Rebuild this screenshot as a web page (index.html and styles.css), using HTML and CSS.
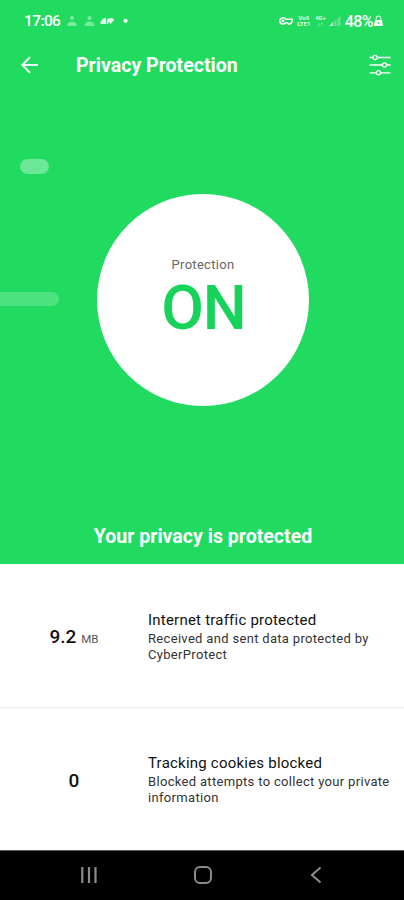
FILE: index.html
```html
<!DOCTYPE html>
<html lang="en">
<head>
<meta charset="utf-8">
<title>Privacy Protection</title>
<link rel="stylesheet" href="styles.css">
</head>
<body>
<main class="screen">
  <section class="hero">
    <div class="status">
      <span class="clock">17:06</span>
      <svg class="notices" width="66" height="14" viewBox="0 0 66 14" fill="#fff">
        <g opacity=".4"><circle cx="6" cy="4" r="2.1"/><path d="M1.300 12V10q4.700-4.800 9.400 0v2z"/></g>
        <g opacity=".4"><circle cx="23.500" cy="4" r="2.100"/><path d="M18.800 12V10q4.700-4.800 9.400 0v2z"/></g>
        <path opacity=".85" d="M34.500 10V7.500L38 4h2v6zM41 5.500Q45 2.500 48.500 5.500L44.700 10 43 8l-1 2h-1.500z"/>
        <circle cx="59.500" cy="6.800" r="2.100"/>
      </svg>
      <span class="spacer"></span>
      <svg class="key" width="16" height="12" viewBox="0 0 16 12" fill="none" stroke="#fff" stroke-width="1.500">
        <path d="M7.700 4.300A3.200 3.200 0 1 0 7.700 7.700H9L11 9.300l2-1.100 1-1.500V4.300z"/><circle cx="5" cy="6" r=".7"/>
      </svg>
      <span class="tiny volte">Vo9<br>LTE1</span>
      <span class="tiny data">4G+<br>↓↑</span>
      <svg class="signal" width="12" height="12" viewBox="0 0 12 12" fill="#fff"><path opacity=".3" d="M5 6.500l2.500-2V11H5zM8.500 3.500L11.500 1v10h-3z"/><path opacity=".7" d="M0 11l4-4v4z"/></svg>
      <span class="battery">48%</span>
      <svg class="lock" width="9" height="12" viewBox="0 0 9 12"><path d="M2.200 6V3.500a2.300 2.300 0 0 1 4.600 0V6" fill="none" stroke="#fff" stroke-opacity=".75" stroke-width="1.200"/><path d="M1 5h7l1 6H0z" fill="#fff"/><circle cx="4.500" cy="7.800" r="1" fill="#21db61"/></svg>
    </div>
    <header class="bar">
      <svg class="back" width="18" height="18" viewBox="0 0 18 18" fill="none" stroke="#fff" stroke-width="1.900"><path d="M17 9H1.500M9 1.200L1.300 9 9 16.800"/></svg>
      <h1 class="title">Privacy Protection</h1>
      <svg class="tune" width="22" height="22" viewBox="0 0 22 22" fill="#21db61" stroke="#fff" stroke-width="1.300">
        <path d="M.5 3.500h21M.5 11h21M.5 18.800h21"/><circle cx="6" cy="3.500" r="2.100"/><circle cx="15.500" cy="11" r="2.100"/><circle cx="9.500" cy="18.800" r="2.100"/>
      </svg>
    </header>
    <i class="pill pill-small"></i>
    <i class="pill pill-edge"></i>
    <div class="dial">
      <span class="dial-label">Protection</span>
      <strong class="dial-state">ON</strong>
    </div>
    <h2 class="summary">Your privacy is protected</h2>
  </section>
  <section class="stat">
    <div class="value"><b>9.2</b><small>MB</small></div>
    <div class="detail"><h3>Internet traffic protected</h3><p>Received and sent data protected by<br>CyberProtect</p></div>
  </section>
  <section class="stat stat-cookies">
    <div class="value"><b>0</b></div>
    <div class="detail"><h3>Tracking cookies blocked</h3><p>Blocked attempts to collect your private<br>information</p></div>
  </section>
  <nav class="nav">
    <svg width="18" height="18" viewBox="0 0 18 18" stroke="#8b8b8b" stroke-width="2.200"><path d="M2.300 1v16M9 1v16M15.500 1v16"/></svg>
    <svg class="home" width="20" height="20" viewBox="0 0 20 20" fill="none" stroke="#8b8b8b" stroke-width="2"><rect x="2" y="2" width="16" height="16" rx="5"/></svg>
    <svg width="12" height="18" viewBox="0 0 12 18" fill="none" stroke="#8b8b8b" stroke-width="2.100"><path d="M10.500 1.500L2 9l8.500 7.500"/></svg>
  </nav>
</main>
</body>
</html>
```
FILE: styles.css
```css
* { box-sizing: border-box; margin: 0; padding: 0; }
body { width: 404px; height: 900px; overflow: hidden; font-family: Roboto, sans-serif; background: #fff; color: #111; }
svg { display: block; flex: none; }
.screen { display: flex; flex-direction: column; height: 900px; }
.hero { position: relative; height: 564px; background: #21db61; color: #fff; display: flex; flex-direction: column; align-items: center; }
.status { width: 100%; height: 42px; padding: 0 21px 0 24px; display: flex; align-items: center; }
.clock { font-size: 15.5px; font-weight: 500; letter-spacing: -0.6px; }
.notices { margin-left: 6px; }
.spacer { flex: 1; }
.tiny { font-size: 6px; line-height: 6px; font-weight: 700; text-align: center; opacity: .85; }
.volte { width: 16px; margin-left: 2px; }
.data { width: 13px; margin-left: 2px; }
.signal { margin-left: 2px; }
.battery { font-size: 16px; font-weight: 500; letter-spacing: -0.6px; margin-left: 4px; }
.lock { margin-left: 1px; }
.bar { width: 100%; height: 46px; padding: 0 13px 0 21px; display: flex; align-items: center; }
.title { flex: 1; margin: 2px 0 0 37px; font-size: 19.5px; line-height: 24px; font-weight: 700; letter-spacing: 0.03px; }
.pill { position: absolute; background: #fff; border-radius: 8px; }
.pill-small { left: 20px; top: 159px; width: 29px; height: 15px; opacity: .34; }
.pill-edge { left: 0; top: 292px; width: 59px; height: 14px; border-radius: 0 7px 7px 0; opacity: .2; }
.dial { width: 212px; height: 212px; margin: 106px 0 0 1px; border-radius: 50%; background: #fff; display: flex; flex-direction: column; align-items: center; padding-top: 63px; }
.dial-label { font-size: 13px; line-height: 16px; color: #666; letter-spacing: .3px; margin-left: 1px; }
.dial-state { margin: 4px 0 0 2px; font-size: 62px; line-height: 62px; font-weight: 500; color: #16d35a; letter-spacing: -1px; }
.summary { margin-top: 119px; font-size: 19.5px; line-height: 24px; font-weight: 700; letter-spacing: 0.02px; margin-left: 2px; }
.stat { height: 142px; display: flex; }
.stat-cookies { height: 144px; border-top: 3px solid #f5f5f5; }
.stat .value { width: 148px; display: flex; justify-content: center; align-items: baseline; gap: 5px; padding-top: 61px; line-height: 24px; }
.stat-cookies .value { padding-top: 60px; }
.value b { font-size: 19px; font-weight: 500; }
.value small { font-size: 11.5px; color: #555; }
.detail { padding-top: 46px; white-space: nowrap; }
.stat-cookies .detail { padding-top: 44px; }
.detail h3 { font-size: 15px; line-height: 20px; font-weight: 400; letter-spacing: .22px; }
.detail p { font-size: 13px; line-height: 15.5px; color: #333; letter-spacing: .32px; margin-top: 1px; }
.nav { height: 50px; background: #000; border-top: 1px solid #555; display: flex; align-items: center; justify-content: space-between; padding: 0 82px 2px 80px; }
.home { margin-right: 3px; }
```
